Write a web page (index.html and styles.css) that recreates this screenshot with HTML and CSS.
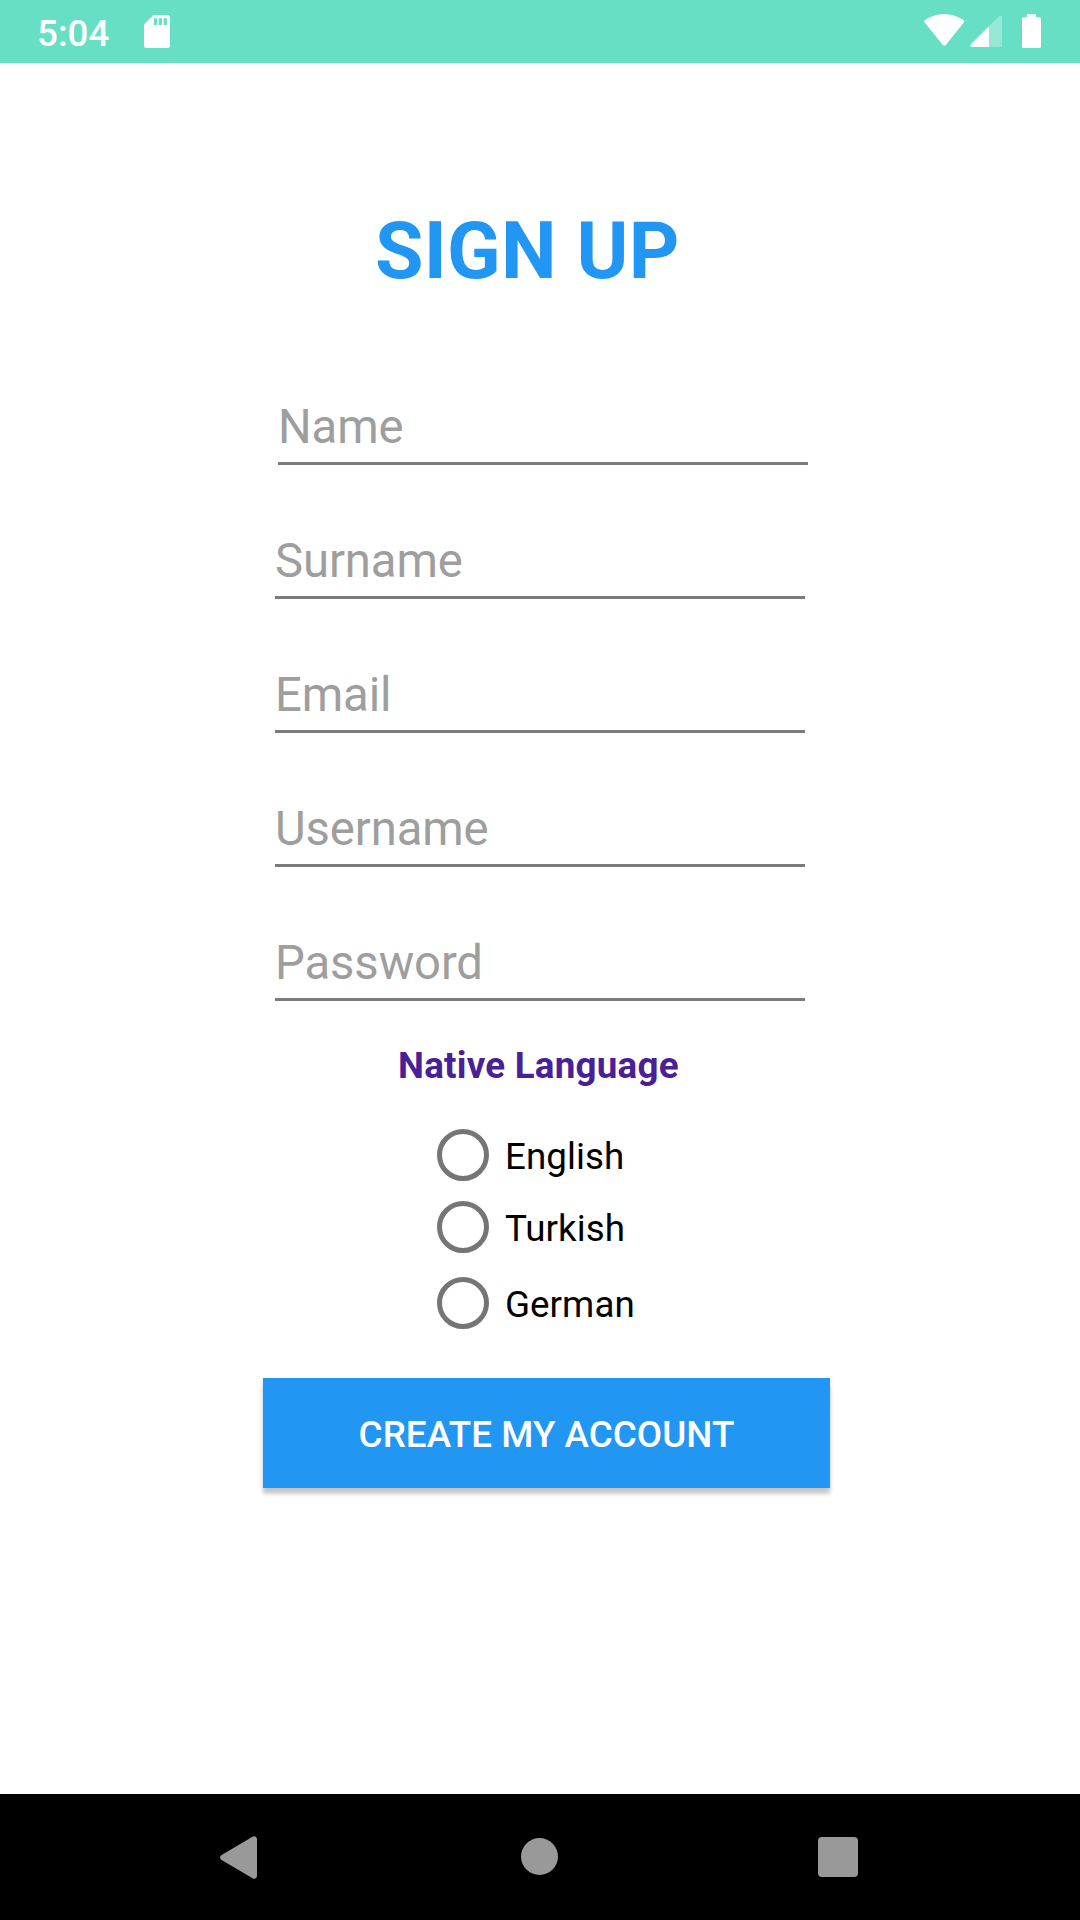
FILE: index.html
```html
<!DOCTYPE html>
<html lang="en">
<head>
<meta charset="utf-8">
<title>Sign Up</title>
<link rel="stylesheet" href="styles.css">
</head>
<body>
<div class="screen">
  <header class="status-bar">
    <span class="clock">5:04</span>
    <svg class="sd-card" width="26" height="33" viewBox="0 0 26 33" fill="#fff"><path fill-rule="evenodd" d="M9.4 0H23.2A2.8 2.8 0 0 1 26 2.8V30.2A2.8 2.8 0 0 1 23.2 33H2.8A2.8 2.8 0 0 1 0 30.2V9.4ZM9.8 3.3V10H13.1V3.3ZM14.7 3.3V10H18V3.3ZM19.6 3.3V10H22.9V3.3Z"/></svg>
    <svg class="status-icons" width="118" height="35" viewBox="0 0 118 35" fill="#fff">
      <path d="M.8 8.6C-.1 7.6 0 6.7 1 6 7 2 13.5 0 20.2 0S33.5 2 39.5 6C40.5 6.700 40.600 7.600 39.800 8.600L22 30.800Q20.300 32.600 18.600 30.800Z"/>
      <path opacity=".3" d="M65 12.300L75 2.300Q77.500 .8 78 3V31.500Q78 33 76.500 33H65Z"/>
      <path d="M47.500 33Q45.500 31.500 47.200 30L65 12.300V33Z"/>
      <path d="M103 0H112V3.200H115.500Q117 3.200 117 4.700V32.500Q117 34 115.500 34H99.500Q98 34 98 32.500V4.700Q98 3.200 99.500 3.200H103Z"/>
    </svg>
  </header>
  <main class="content">
    <h1 class="title">SIGN UP</h1>
    <form class="form">
      <div class="fields">
        <input class="field field-first" type="text" placeholder="Name">
        <input class="field" type="text" placeholder="Surname">
        <input class="field" type="email" placeholder="Email">
        <input class="field" type="text" placeholder="Username">
        <input class="field" type="password" placeholder="Password">
      </div>
      <h2 class="language-title">Native Language</h2>
      <div class="languages">
        <label class="option"><input class="radio" type="radio" name="language"><span class="option-text">English</span></label>
        <label class="option"><input class="radio" type="radio" name="language"><span class="option-text">Turkish</span></label>
        <label class="option option-last"><input class="radio" type="radio" name="language"><span class="option-text">German</span></label>
      </div>
      <button class="submit" type="button">CREATE MY ACCOUNT</button>
    </form>
  </main>
  <nav class="nav-bar">
    <svg class="nav-back" width="37" height="43" viewBox="0 0 37 43" fill="#999"><path d="M1.200 19.200L32.500.7Q35-.6 36.200 1.200Q37 2 37 3V40Q37 41 36.200 41.800Q35 43.600 32.500 42.300L1.200 23.800Q-1.200 21.500 1.200 19.200Z"/></svg>
    <span class="nav-home"></span>
    <span class="nav-recent"></span>
  </nav>
</div>
</body>
</html>
```
FILE: styles.css
```css
* { box-sizing: border-box; }

body {
  margin: 0;
  background: #fff;
  font-family: Roboto, sans-serif;
}

.screen {
  display: flex;
  flex-direction: column;
  width: 1080px;
  height: 1920px;
  overflow: hidden;
}

.status-bar {
  display: flex;
  align-items: flex-start;
  height: 63px;
  padding: 14px 38px 0 37px;
  background: #67dfc5;
}

.clock {
  width: 107px;
  margin-top: -2px;
  color: #fff;
  font-size: 36.75px;
  font-weight: 500;
  line-height: 44px;
}

.sd-card { margin-top: 1px; }

.status-icons { margin-left: auto; }

.content {
  flex: 1;
  display: flex;
  flex-direction: column;
  padding-top: 141px;
}

.title {
  margin: 0 0 101px 375px;
  color: #2196f3;
  font-size: 78.75px;
  font-weight: 700;
  letter-spacing: .25px;
  line-height: 94px;
}

.form {
  display: flex;
  flex-direction: column;
}

.fields {
  display: flex;
  flex-direction: column;
  gap: 68px;
  margin-left: 275px;
}

.field {
  width: 530px;
  height: 66px;
  padding: 0 0 7px;
  border: 0;
  border-bottom: 3px solid #7b7b7b;
  border-radius: 0;
  outline: 0;
  background: none;
  color: #000;
  font-family: inherit;
  font-size: 47.25px;
  letter-spacing: -.1px;
  line-height: 56px;
}

.field-first { margin-left: 3px; }

.field::placeholder {
  color: #9e9e9e;
  opacity: 1;
}

.language-title {
  margin: 43px 0 0 398px;
  color: #4a2097;
  font-size: 36.75px;
  font-weight: 700;
  letter-spacing: .23px;
  line-height: 44px;
}

.languages {
  display: flex;
  flex-direction: column;
  gap: 20px;
  margin: 41px 0 0 437px;
}

.option {
  display: flex;
  align-items: center;
  gap: 16px;
  height: 52px;
}

.option-last { margin-top: 4px; }

.radio {
  appearance: none;
  width: 52px;
  height: 52px;
  margin: 0;
  border: 5px solid #757575;
  border-radius: 50%;
}

.option-text {
  padding-top: 3px;
  color: #000;
  font-size: 36.75px;
  letter-spacing: .05px;
  line-height: 44px;
}

.submit {
  width: 567px;
  height: 110px;
  margin: 49px 0 0 263px;
  padding: 4px 0 0;
  border: 0;
  background: #2196f3;
  box-shadow: 0 6px 4px rgba(0, 0, 0, .2), 0 1px 5px rgba(0, 0, 0, .08);
  color: #fff;
  font-family: inherit;
  font-size: 36.75px;
  font-weight: 500;
  letter-spacing: .05px;
  line-height: 44px;
}

.nav-bar {
  display: flex;
  align-items: center;
  height: 126px;
  padding-left: 220px;
  background: #000;
}

.nav-home {
  width: 37px;
  height: 37px;
  margin: 0 0 1px 264px;
  border-radius: 50%;
  background: #999;
}

.nav-recent {
  width: 40px;
  height: 40px;
  margin-left: 260px;
  border-radius: 4px;
  background: #999;
}
```
